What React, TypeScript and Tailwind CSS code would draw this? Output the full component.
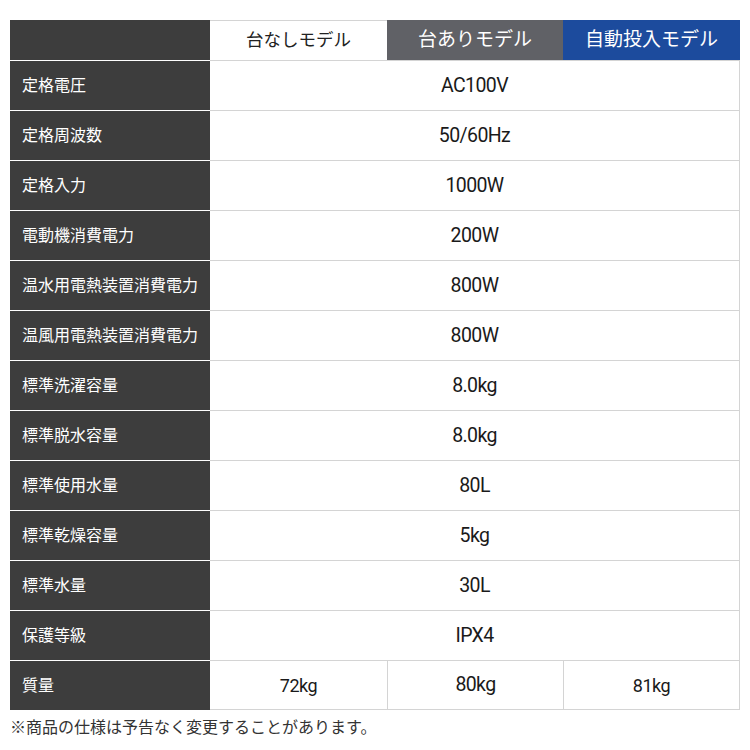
const rows: [string, string][] = [
  ['定格電圧', 'AC100V'],
  ['定格周波数', '50/60Hz'],
  ['定格入力', '1000W'],
  ['電動機消費電力', '200W'],
  ['温水用電熱装置消費電力', '800W'],
  ['温風用電熱装置消費電力', '800W'],
  ['標準洗濯容量', '8.0kg'],
  ['標準脱水容量', '8.0kg'],
  ['標準使用水量', '80L'],
  ['標準乾燥容量', '5kg'],
  ['標準水量', '30L'],
  ['保護等級', 'IPX4'],
];

export default function App() {
  return (
    <div
      className="w-[750px] h-[750px] bg-white pt-5 px-[10px] text-[#222]"
      style={{ fontFamily: 'Roboto, "Noto Sans CJK JP", sans-serif' }}
    >
      <div className="grid grid-cols-[200px_177px_176px_177px]">
        {/* header */}
        <div className="h-10 bg-[#3d3d3d]" />
        <div className="h-10 flex items-center justify-center text-[17.5px] border-t border-[#d4d4d4]">
          台なしモデル
        </div>
        <div className="h-10 flex items-center justify-center text-[19px] bg-[#606166] text-white">
          台ありモデル
        </div>
        <div className="h-10 flex items-center justify-center text-[19px] bg-[#1c4b9d] text-white">
          自動投入モデル
        </div>

        {rows.map(([label, value]) => (
          <div key={label} className="contents">
            <div className="h-[50px] bg-[#3d3d3d] border-t border-white text-white text-[16px] flex items-center pl-3">
              {label}
            </div>
            <div className="col-span-3 h-[50px] border-t border-r border-[#d4d4d4] flex items-center justify-center text-[19.5px] tracking-[-0.6px] text-[#1a1a1a]">
              {value}
            </div>
          </div>
        ))}

        {/* weight row */}
        <div className="h-[50px] bg-[#3d3d3d] border-t border-white text-white text-[16px] flex items-center pl-3">
          質量
        </div>
        <div className="h-[50px] border-t border-b border-[#d4d4d4] flex items-center justify-center text-[18px] tracking-[-0.5px] text-[#1a1a1a]">
          72kg
        </div>
        <div className="h-[50px] border-t border-b border-l border-[#d4d4d4] flex items-center justify-center text-[19.5px] tracking-[-0.6px] text-[#1a1a1a]">
          80kg
        </div>
        <div className="h-[50px] border-t border-b border-l border-r border-[#d4d4d4] flex items-center justify-center text-[18px] tracking-[-0.5px] text-[#1a1a1a]">
          81kg
        </div>
      </div>
      <p className="mt-[6px] text-[16px] text-[#333]">※商品の仕様は予告なく変更することがあります。</p>
    </div>
  );
}
